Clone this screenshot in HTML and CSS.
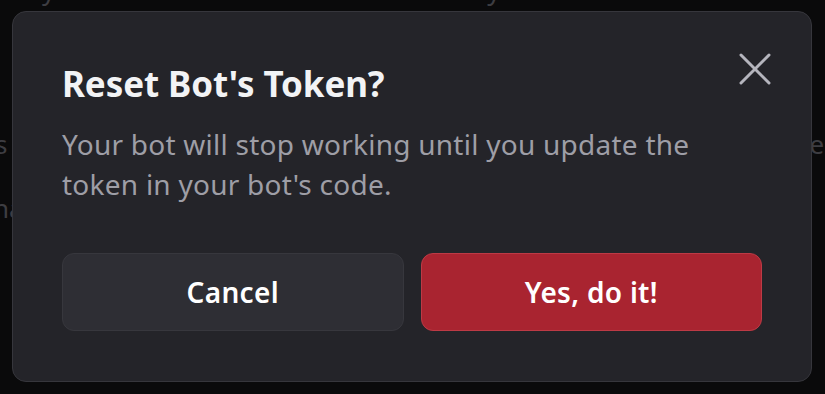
FILE: index.html
```html
<!DOCTYPE html>
<html lang="en">
<head>
<meta charset="utf-8">
<title>Reset Bot's Token?</title>
<link rel="stylesheet" href="styles.css">
</head>
<body>
<div class="backdrop">
  <div class="bg-row bg-top"><span class="g1">y</span><span class="g2">y</span></div>
  <div class="bg-row bg-mid"><span>s</span><span class="right">er</span></div>
  <div class="bg-row bg-low"><span class="na">na</span></div>
</div>
<div class="modal" role="dialog">
  <button class="close" aria-label="Close">
    <svg width="32" height="32" viewBox="0 0 32 32"><path d="M2 2 L30 30 M30 2 L2 30" stroke="#b5b5bd" stroke-width="3" stroke-linecap="round" fill="none"/></svg>
  </button>
  <h1 class="title">Reset Bot's Token?</h1>
  <p class="body">Your bot will stop working until you update the token in your bot's code.</p>
  <div class="actions">
    <button class="btn btn-secondary">Cancel</button>
    <button class="btn btn-danger">Yes, do it!</button>
  </div>
</div>
</body>
</html>
```
FILE: styles.css
```css
html, body {
  margin: 0;
  padding: 0;
  height: 100%;
}
body {
  background: #0a0a0b;
  font-family: "Noto Sans", "Open Sans", sans-serif;
  overflow: hidden;
  position: relative;
}
.backdrop {
  color: #3d3d42;
  font-size: 26px;
}
.bg-row {
  display: flex;
  white-space: nowrap;
  line-height: 34px;
}
.bg-top {
  margin-top: -27px;
  padding-left: 42px;
}
.bg-top .g2 { margin-left: 432px; }
.bg-mid {
  margin-top: 120px;
  justify-content: space-between;
  margin-left: -5px;
  margin-right: -10px;
}
.bg-low {
  margin-top: 30px;
  margin-left: -7px;
}
.modal {
  position: absolute;
  left: 12px;
  top: 11px;
  width: 800px;
  height: 371px;
  box-sizing: border-box;
  background: #242429;
  border: 1px solid #36363c;
  border-radius: 14px;
  padding: 51px 49px 50px 49px;
  display: flex;
  flex-direction: column;
}
.close {
  position: absolute;
  right: 40px;
  top: 41px;
  width: 32px;
  height: 32px;
  padding: 0;
  border: 0;
  background: none;
  display: flex;
}
.title {
  margin: 0;
  color: #f2f3f5;
  font-size: 35px;
  font-weight: 700;
  line-height: 42px;
  letter-spacing: -0.1px;
}
.body {
  margin: 19px 0 0 0;
  color: #9e9ea6;
  font-size: 28px;
  line-height: 40px;
  letter-spacing: 0.25px;
  width: 670px;
}
.actions {
  margin-top: auto;
  display: flex;
  gap: 17px;
}
.btn {
  flex: 1;
  height: 78px;
  border-radius: 12px;
  font-family: inherit;
  font-size: 28px;
  font-weight: 600;
  letter-spacing: 0.3px;
  color: #ffffff;
}
.btn-secondary {
  background: #2e2e34;
  border: 1px solid #37373d;
}
.btn-danger {
  background: #a92430;
  border: 1px solid #bd3a45;
}
```
